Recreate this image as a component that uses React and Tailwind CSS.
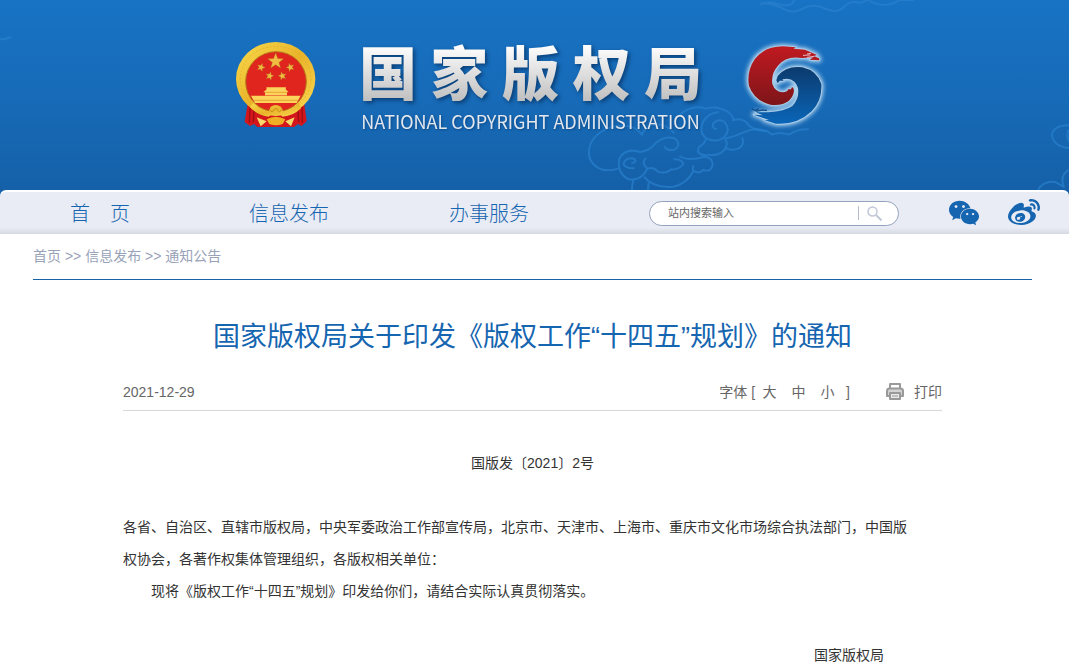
import React, { useState } from "react";
import { FaWeixin, FaWeibo } from "react-icons/fa";

const sizes = [
  { label: "大", cls: "text-lg" },
  { label: "中", cls: "text-base" },
  { label: "小", cls: "text-sm" },
];

const star = (cx, cy, r, turn = -90) =>
  Array.from({ length: 10 }, (_, i) => {
    const a = ((turn + i * 36) * Math.PI) / 180;
    const d = i % 2 ? r * 0.42 : r;
    return `${(cx + d * Math.cos(a)).toFixed(1)},${(cy + d * Math.sin(a)).toFixed(1)}`;
  }).join(" ");

const Emblem = () => (
  <svg className="w-20 h-[86px] shrink-0" viewBox="50 36 240 258" aria-hidden="true">
    <defs>
      <linearGradient id="gold" x1="0" y1="0" x2="1" y2="1">
        <stop offset="0" stopColor="#f9dc4c" />
        <stop offset="0.5" stopColor="#e9b32a" />
        <stop offset="1" stopColor="#fbdc55" />
      </linearGradient>
    </defs>
    <path d="M86 216 L76 276 L92 288 L104 282 L114 291 L224 291 L236 282 L247 288 L262 274 L254 216 L210 236 L130 236Z" fill="#d3161b" />
    <path d="M92 232 L90 278 M104 240 L102 276 M248 232 L249 278 M236 240 L238 276" stroke="#9c0f14" strokeWidth="4" />
    <ellipse cx="169" cy="147" rx="119" ry="111" fill="url(#gold)" />
    <ellipse cx="169" cy="147" rx="106" ry="98" fill="none" stroke="#e2a829" strokeWidth="2" strokeDasharray="6 5" />
    <ellipse cx="170" cy="155" rx="91" ry="90" fill="#e0251f" stroke="#b77318" strokeWidth="3" />
    <g fill="#f0bd42" stroke="#a9691a" strokeWidth="1">
      <polygon points={star(169, 94, 25)} />
      <polygon points={star(125, 112, 13, -70)} />
      <polygon points={star(213, 112, 13, -110)} />
      <polygon points={star(151, 138, 13, -75)} />
      <polygon points={star(189, 138, 13, -105)} />
    </g>
    <path d="M141 172 H200 L199 178 L208 187 H203 V196 H137 V187 H132 L142 178Z M95 197 H244 L232 219 H107Z" fill="#fcd35b" />
    <path d="M137 187 H203 M104 211 H236" stroke="#e6a535" strokeWidth="3" />
    <path d="M102 218 Q120 242 148 246 L154 230 Q169 220 185 230 L192 246 Q222 240 238 218 L246 234 Q222 258 190 260 L180 252 L169 258 L158 252 L148 260 Q114 256 92 232Z" fill="url(#gold)" />
    <path d="M112 262 L142 274 L124 289Z M226 262 L198 274 L215 289Z" fill="#f6d96a" />
    <path d="M142 268 Q169 252 198 268 L190 282 Q169 290 150 282Z" fill="#efae24" />
    <path d="M148 236 L158 246 L169 234 L180 246 L191 236" fill="none" stroke="#c98c1d" strokeWidth="3" />
  </svg>
);

const Swirl = () => (
  <svg className="w-[84px] h-[90px] shrink-0 overflow-visible" viewBox="76 38 252 270" aria-hidden="true">
    <defs>
      <linearGradient id="red" x1="0" y1="0" x2="0" y2="1">
        <stop offset="0" stopColor="#c01a20" />
        <stop offset="1" stopColor="#7d1519" />
      </linearGradient>
      <linearGradient id="blue" x1="0" y1="0" x2="0" y2="1">
        <stop offset="0" stopColor="#0b3a6d" />
        <stop offset="1" stopColor="#0a66b8" />
      </linearGradient>
      <filter id="glow" x="-20%" y="-20%" width="140%" height="140%">
        <feGaussianBlur stdDeviation="7" />
      </filter>
      <path id="redArm" d="M299 93 L270 91 L281 84 L246 86 Q200 78 176 108 Q153 134 158 164 Q168 192 196 188 Q208 184 204 180 L214 180 L217 172 L222 178 Q226 194 208 214 Q188 230 152 226 Q104 214 88 170 Q80 126 106 88 Q134 52 190 51 L228 54 L222 58 L256 61 L292 77 L282 80 L298 87Z" />
      <path id="blueArm" d="M170 153 L174 140 Q200 108 248 114 Q292 124 305 164 Q308 214 276 246 Q232 288 168 283 L134 272 L148 272 L102 256 L130 258 L108 249 L146 249 Q196 246 218 230 Q240 208 235 176 Q228 150 202 148 L188 150 L192 154 L180 154 L174 162Z" />
    </defs>
    <g filter="url(#glow)" fill="#b9daf2" stroke="#b9daf2" strokeWidth="12" strokeLinejoin="round">
      <use href="#redArm" />
      <use href="#blueArm" />
    </g>
    <g fill="#a9cbe8" stroke="#a9cbe8" strokeWidth="5" strokeLinejoin="round">
      <use href="#redArm" />
      <use href="#blueArm" />
    </g>
    <use href="#redArm" fill="url(#red)" />
    <use href="#blueArm" fill="url(#blue)" />
    <path d="M250 78 L272 77 M262 84 L284 81 M262 74 L274 72" stroke="#e9b9c4" strokeWidth="3" />
    <path d="M96 238 L106 243 L118 238 M108 246 L128 242 L142 243" fill="none" stroke="#0c4f8d" strokeWidth="4" />
  </svg>
);

const Clouds = () => (
  <svg
    className="absolute inset-0 w-full h-full"
    viewBox="0 0 1069 190"
    preserveAspectRatio="xMidYMin slice"
    fill="none"
    stroke="#2a80cd"
    strokeOpacity="0.7"
    aria-hidden="true"
  >
    <g transform="translate(570 90) scale(0.3333)" strokeWidth="6">
      <path d="M145 236 Q84 254 60 208 Q46 160 92 126 Q140 96 190 112 Q206 120 216 134 Q226 112 252 104 Q282 98 314 130" />
      <path d="M330 74 Q366 42 408 56 Q442 46 474 66 Q490 76 490 90 Q522 82 536 106 Q560 124 590 122 L606 134 Q630 124 656 134 Q684 116 716 118" />
      <path d="M440 118 Q424 114 430 100 Q446 84 464 96 Q482 120 464 140 Q440 160 410 146 Q384 126 400 94 Q414 70 446 66" />
      <path d="M464 146 Q500 138 528 124 Q560 112 590 124 M516 142 Q526 166 504 176 Q484 184 466 174 Q476 160 464 146" />
      <path d="M466 176 Q448 200 418 194 Q396 200 384 186 L386 172 Q404 160 408 148" />
      <path d="M184 220 Q204 216 192 206 Q168 200 160 222 Q170 238 194 234 M210 186 Q166 172 148 206 Q140 250 176 268 Q214 274 232 236" />
      <path d="M210 186 Q240 182 256 160 Q286 134 316 146 Q336 166 312 180 Q286 182 284 168" />
      <path d="M232 236 Q212 218 228 204 M232 236 Q252 230 262 244 Q286 254 304 238 Q326 240 340 222 Q336 206 310 208 M328 198 Q350 212 388 204 Q424 194 428 222 Q426 248 398 240 Q392 250 376 246 Q362 238 372 226" />
      <path d="M222 260 Q250 296 310 290 Q350 282 370 244 M186 300 Q186 284 190 270 M234 300 L236 278" />
      <path d="M1497 106 Q1450 106 1446 136 Q1452 170 1497 174 M1404 300 Q1420 272 1456 276 L1484 292 M1497 240 Q1468 256 1482 292 M1497 118 Q1488 136 1497 154" />
    </g>
    <path d="M760 5 Q768 0 778 4 Q792 8 794 0 M761 3 Q775 4 786 10 Q793 14 804 8 Q814 3 826 9 Q838 14 845 6 Q851 0 860 3 L868 0 M868 0 Q884 10 900 0 L914 0" strokeWidth="2" />
    <path d="M0 39 Q5 40 11 37" strokeWidth="2" />
  </svg>
);

const PrinterIcon = () => (
  <svg className="w-[18px] h-[17px]" viewBox="0 0 18 17" fill="none" stroke="#999" strokeWidth="2" strokeLinejoin="round" aria-hidden="true">
    <path d="M4 5V1h10v4" />
    <path d="M4 13H1V8q0-2.5 2.5-2.5h11Q17 5.500 17 8v5h-3" fill="#d2d2d2" />
    <path d="M4 10h10v6H4z" fill="#e8e8e8" />
    <path d="M6 13h6" strokeWidth="1" />
  </svg>
);

const App = () => {
  const [fontSize, setFontSize] = useState("text-sm");

  return (
    <div className="min-h-screen bg-white font-['Liberation_Sans','Noto_Sans_CJK_SC',sans-serif]">
      {/* Header */}
      <header className="bg-[#1560a8]">
        <div className="relative h-[190px] bg-linear-to-b from-[#1873c4] via-[#176bb8] to-[#1560a8]">
          <Clouds />
          <div className="relative flex justify-center items-start pt-[38px] pr-1">
            <div className="pt-1">
              <Emblem />
            </div>
            <div className="mx-[43px] text-center whitespace-nowrap font-['Noto_Sans_CJK_SC',sans-serif]">
              <h1 className="pb-1 leading-[64px] text-[58px] font-black drop-shadow-[2px_2px_2px_rgba(0,30,70,0.6)]">
                <span className="bg-linear-to-b from-white from-20% to-[#bdbdbd] to-90% bg-clip-text text-transparent">
                  国 家 版 权 局
                </span>
              </h1>
              <p className="text-[18px] leading-[30px] text-[#e4e8ee] drop-shadow-[1px_1px_1px_rgba(0,30,70,0.4)]">
                NATIONAL COPYRIGHT ADMINISTRATION
              </p>
            </div>
            <div className="pt-1">
              <Swirl />
            </div>
          </div>
        </div>

        {/* Navigation */}
        <nav className="flex items-center h-11 pl-[70px] rounded-t-md border-t-2 border-white bg-linear-to-b from-[#e9ecf4] from-85% to-[#d5d9e0] text-[20px] text-[#1565b0]">
          <a href="#" className="w-[179px] pt-0.5 font-light whitespace-pre">首　页</a>
          <a href="#" className="w-50 pt-0.5 font-light">信息发布</a>
          <a href="#" className="w-50 pt-0.5 font-light">办事服务</a>
          <form className="flex items-center w-[250px] h-[25px] rounded-full border border-[#94a3bd] bg-white" onSubmit={(e) => e.preventDefault()}>
            <input
              type="text"
              aria-label="站内搜索输入"
              placeholder="站内搜索输入"
              className="flex-1 min-w-0 pl-[18px] text-[11px] outline-none placeholder:text-[#666]"
            />
            <button type="submit" aria-label="搜索" className="flex items-center h-[14px] mr-4 pl-2 border-l border-[#b4bccb]">
              <svg className="w-[15px] h-[15px]" viewBox="0 0 15 15" fill="none" stroke="#c0c7d6" aria-hidden="true">
                <circle cx="5.500" cy="5.500" r="4.500" strokeWidth="1.500" />
                <path d="M9 9l5.500 5.500" strokeWidth="2" />
              </svg>
            </button>
          </form>
          <a href="#" aria-label="微信" className="ml-[49px]">
            <FaWeixin className="w-[32px] h-[28px]" />
          </a>
          <a href="#" aria-label="微博" className="ml-7">
            <FaWeibo className="w-[32px] h-[32px]" />
          </a>
        </nav>
      </header>

      <main className="pl-[33px] pr-[37px]">
        {/* Breadcrumb */}
        <div className="h-[46px] border-b border-[#1565a8] text-sm/11 text-[#98a2b8]">
          <a href="#">首页</a> &gt;&gt; <a href="#">信息发布</a> &gt;&gt; <a href="#">通知公告</a>
        </div>

        {/* Article */}
        <article className="mx-[90px]">
          <h2 className="pt-9 text-center text-[27px] leading-[42px] text-[#1565b0]">
            国家版权局关于印发《版权工作“十四五”规划》的通知
          </h2>

          <div className="flex items-center justify-between h-9 mt-[17px] pb-0.5 border-b border-[#d8d8d8] text-sm text-[#666]">
            <span>2021-12-29</span>
            <div className="flex items-center">
              <span>字体 [</span>
              {sizes.map((s) => (
                <button key={s.label} className="w-[29px] cursor-pointer" onClick={() => setFontSize(s.cls)}>
                  {s.label}
                </button>
              ))}
              <span className="ml-1">]</span>
              <button className="flex items-center gap-[10px] ml-9 cursor-pointer" onClick={() => window.print()}>
                <PrinterIcon />
                打印
              </button>
            </div>
          </div>

          <div className={`pt-9 leading-8 text-[#333] ${fontSize}`}>
            <p className="text-center">国版发〔2021〕2号</p>
            <p className="mt-8">
              各省、自治区、直辖市版权局，中央军委政治工作部宣传局，北京市、天津市、上海市、重庆市文化市场综合执法部门，中国版
              <br />
              权协会，各著作权集体管理组织，各版权相关单位：
            </p>
            <p className="indent-[2em]">现将《版权工作“十四五”规划》印发给你们，请结合实际认真贯彻落实。</p>
            <p className="mt-8 pr-[58px] text-right">国家版权局</p>
          </div>
        </article>
      </main>
    </div>
  );
};

export default App;
